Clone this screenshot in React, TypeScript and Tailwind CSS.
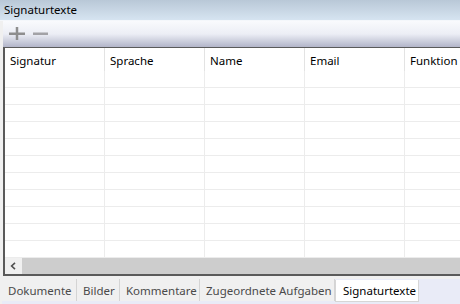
const columns = ["Signatur", "Sprache", "Name", "Email", "Funktion"];
const rows = Array.from({ length: 11 });

const tabs = [
  { label: "Dokumente", w: "w-[75px]" },
  { label: "Bilder", w: "w-[43px]" },
  { label: "Kommentare", w: "w-[80px]" },
  { label: "Zugeordnete Aufgaben", w: "w-[135px]" },
];

export default function App() {
  return (
    <div className="w-[460px] h-[304px] overflow-hidden flex flex-col bg-[#f0f0f0] text-[11.5px] whitespace-nowrap text-black font-['Noto_Sans',sans-serif]">
      {/* title */}
      <div className="h-[20px] shrink-0 flex items-center px-[4px] bg-gradient-to-b from-[#b9c8d7] to-[#d6e4f1] leading-none">
        Signaturtexte
      </div>

      <div className="flex-1 flex flex-col pl-[3px] border-t border-[#f4f7fb]">
        {/* toolbar */}
        <div className="h-[26px] shrink-0 flex items-center gap-[8px] pl-[6px] bg-gradient-to-b from-[#f9fafd] via-[#eceef5] to-[#b2b5c9]">
          <svg width="16" height="14" viewBox="0 0 16 14">
            <rect x="0" y="5.5" width="16" height="2.5" fill="#8e8e8e" />
            <rect x="6.75" y="0" width="2.5" height="13" fill="#8e8e8e" />
          </svg>
          <svg width="15" height="14" viewBox="0 0 15 14">
            <rect x="0" y="5.5" width="15" height="2.5" fill="#a2a2a6" />
          </svg>
        </div>

        {/* table */}
        <div className="flex-1 flex flex-col border-t border-l-2 border-[#5a5a5a] border-b-2 bg-white overflow-hidden">
          <div className="flex h-[23px] shrink-0">
            {columns.map((c) => (
              <div key={c} className="w-[100px] shrink-0 border-r border-[#e3e3e3] flex items-center pl-[5px] pt-[2px]">
                {c}
              </div>
            ))}
          </div>
          <div className="flex-1 overflow-hidden">
            {rows.map((_, i) => (
              <div key={i} className="flex h-[17px] border-b border-[#ececec]">
                {columns.map((c) => (
                  <div key={c} className="w-[100px] shrink-0 border-r border-[#ececec]" />
                ))}
              </div>
            ))}
          </div>
          {/* horizontal scrollbar */}
          <div className="h-[16px] shrink-0 flex bg-[#cdcdcd]">
            <div className="w-[17px] bg-[#f0f0f0] flex items-center justify-center">
              <svg width="7" height="8" viewBox="0 0 7 8">
                <path d="M5 0.8 L1.6 4 L5 7.2" stroke="#505050" strokeWidth="1.6" fill="none" />
              </svg>
            </div>
          </div>
        </div>
      </div>

      {/* tabs */}
      <div className="h-[28px] shrink-0 flex items-start pt-[3px] pl-[2px] bg-[#f0f0f0]">
        <div className="flex h-[25px] flex-1 bg-[#e9ebf7]">
          {tabs.map((t) => (
            <div
              key={t.label}
              className={`${t.w} shrink-0 h-[22px] flex items-center pl-[6px] pt-[1px] bg-[#f0f0f0] border-r border-[#d4d4d4] text-[#4a4a4a]`}
            >
              {t.label}
            </div>
          ))}
          <div className="w-[84px] shrink-0 h-[22px] mt-[1px] flex items-center pl-[7px] pt-[1px] bg-white border border-[#d6d6d6] border-t-0">
            Signaturtexte
          </div>
        </div>
      </div>
    </div>
  );
}
